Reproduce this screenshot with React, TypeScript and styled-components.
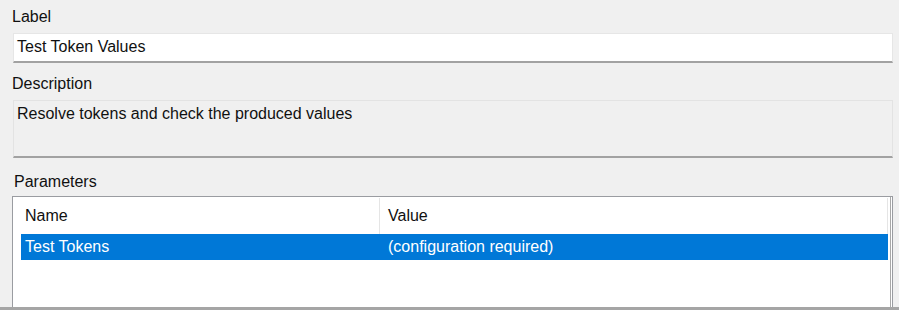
import React from 'react';
import styled, { createGlobalStyle } from 'styled-components';

const GlobalStyle = createGlobalStyle`
  html, body {
    margin: 0;
    padding: 0;
    background: #f0f0f0;
  }
`;

const Panel = styled.div`
  width: 899px;
  height: 310px;
  display: flex;
  flex-direction: column;
  background: #f0f0f0;
  font-family: 'Liberation Sans', Arial, sans-serif;
  font-size: 16px;
  color: #101010;
  overflow: hidden;
  box-sizing: border-box;
`;

const Body = styled.div`
  flex: 1;
  display: flex;
  flex-direction: column;
  padding: 7px 6px 0 12px;
  min-height: 0;
`;

const FieldLabel = styled.div<{ $gap: number; $indent?: boolean }>`
  height: 20px;
  line-height: 20px;
  margin-top: ${p => p.$gap}px;
  padding-left: ${p => (p.$indent ? 2 : 0)}px;
`;

const TextBox = styled.div`
  margin: 6px 0 0 1px;
  height: 25px;
  background: #fff;
  border: 1px solid #e6e6e6;
  border-bottom: 2px solid #a2a2a2;
  padding: 2px 0 0 3px;
  line-height: 21px;
  box-sizing: content-box;
`;

const MemoBox = styled.div`
  margin: 6px 0 0 1px;
  height: 52px;
  background: #f0f0f0;
  border: 1px solid #e3e3e3;
  border-bottom: 2px solid #a2a2a2;
  padding: 3px 0 0 3px;
  line-height: 20px;
  box-sizing: content-box;
`;

const ListView = styled.div`
  margin-top: 4px;
  flex: 1;
  background: #fff;
  border: 1px solid #9a9ca1;
  border-bottom: none;
  box-shadow: inset -1px 0 0 #fff, inset -2px 0 0 #a8a8a8;
  padding: 1px 4px 0 8px;
  display: flex;
  flex-direction: column;
`;

const Row = styled.div<{ $selected?: boolean }>`
  display: grid;
  grid-template-columns: 358px 1fr;
  height: ${p => (p.$selected ? 26 : 36)}px;
  align-items: center;
  background: ${p => (p.$selected ? '#0078d7' : '#fff')};
  color: ${p => (p.$selected ? '#fff' : '#101010')};
  border-right: 1px solid ${p => (p.$selected ? '#0078d7' : '#e5e5e5')};
`;

const Cell = styled.div<{ $second?: boolean; $divider?: boolean }>`
  height: 100%;
  display: flex;
  align-items: center;
  padding-left: ${p => (p.$second ? 8 : 3)}px;
  border-left: 1px solid ${p => (p.$divider ? '#e5e5e5' : 'transparent')};
  white-space: nowrap;
`;

const BottomEdge = styled.div`
  height: 3px;
  background: #a5a5a5;
`;

export default function App() {
  return (
    <>
      <GlobalStyle />
      <Panel>
        <Body>
          <FieldLabel $gap={0}>Label</FieldLabel>
          <TextBox>Test Token Values</TextBox>
          <FieldLabel $gap={11}>Description</FieldLabel>
          <MemoBox>Resolve tokens and check the produced values</MemoBox>
          <FieldLabel $gap={14} $indent>Parameters</FieldLabel>
          <ListView>
            <Row>
              <Cell>Name</Cell>
              <Cell $second $divider>Value</Cell>
            </Row>
            <Row $selected>
              <Cell>Test Tokens</Cell>
              <Cell $second>(configuration required)</Cell>
            </Row>
          </ListView>
        </Body>
        <BottomEdge />
      </Panel>
    </>
  );
}
